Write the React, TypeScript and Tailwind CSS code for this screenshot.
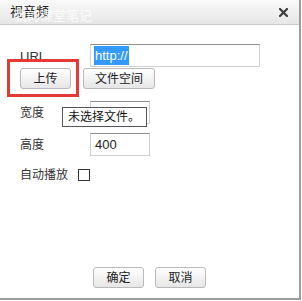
import React from "react"

const font = { fontFamily: '"Liberation Sans", "Noto Sans CJK SC", sans-serif' }

function Btn({ children, className = "" }: { children: React.ReactNode; className?: string }) {
  return (
    <button
      className={`h-[21px] rounded-[3px] border border-[#b9b9b9] bg-gradient-to-b from-[#ffffff] to-[#e6e6e6] text-[12px] leading-none text-[#222] ${className}`}
    >
      {children}
    </button>
  )
}

export default function App() {
  return (
    <div className="relative h-[301px] w-[302px] bg-white" style={font}>
      <div className="flex h-[300px] w-[301px] flex-col border-r-2 border-b-2 border-[#9c9c9c]">
        {/* Barre de titre */}
        <div className="relative flex h-[25px] shrink-0 items-center justify-between border-b border-[#c9c9c9] bg-gradient-to-b from-[#f9f9f9] to-[#e6e6e6] pl-[10px] pr-[10px]">
          <span className="text-[13px] text-[#222]">视音频</span>
          <span className="absolute left-[14px] top-[9px] text-[13px] leading-none text-white/80">我的课堂笔记</span>
          <svg width="9" height="9" viewBox="0 0 9 9" className="mr-[1px]">
            <path d="M1 1 L8 8 M8 1 L1 8" stroke="#3c3c3c" strokeWidth="2.2" strokeLinecap="square" />
          </svg>
        </div>

        {/* Formulaire */}
        <div className="flex flex-1 flex-col pl-[20px] pt-[19px] text-[12px] text-[#333]">
          <div className="flex items-end">
            <span className="w-[70px] shrink-0 pb-[1px] text-[13px]">URL</span>
            <div className="flex h-[23px] w-[170px] items-center border border-[#cfcfcf] border-t-[#8f8f8f] pl-[3px] text-[13px]">
              <span className="bg-[#3399ff] px-[1px] text-white">http://</span>
            </div>
          </div>

          <div className="mt-[1px] flex gap-[12px]">
            <Btn className="w-[51px]">上传</Btn>
            <Btn className="w-[72px]">文件空间</Btn>
          </div>

          <div className="mt-[12px] flex items-center">
            <span className="w-[70px] shrink-0">宽度</span>
            <div className="h-[23px] w-[60px] border border-[#cfcfcf] border-t-[#8f8f8f]" />
          </div>

          <div className="mt-[9px] flex items-center">
            <span className="w-[70px] shrink-0">高度</span>
            <div className="flex h-[23px] w-[60px] items-center border border-[#cfcfcf] border-t-[#8f8f8f] pl-[4px] text-[13px] text-[#222]">
              400
            </div>
          </div>

          <div className="mt-[10px] flex items-center">
            <span className="w-[58px] shrink-0">自动播放</span>
            <span className="h-[12px] w-[12px] shrink-0 border border-[#333]" />
          </div>

          <div className="mt-auto mb-[10px] flex justify-center gap-[11px] pr-[20px]">
            <Btn className="w-[51px]">确定</Btn>
            <Btn className="w-[51px]">取消</Btn>
          </div>
        </div>
      </div>

      {/* Annotation rouge */}
      <div className="pointer-events-none absolute left-[7px] top-[59px] h-[38px] w-[72px] border-[3px] border-[#e53935]" />

      {/* Infobulle */}
      <div className="absolute left-[62px] top-[107px] flex h-[20px] w-[85px] items-center whitespace-nowrap border border-[#555] bg-white pl-[5px] text-[12px] text-[#111]">
        未选择文件。
      </div>
    </div>
  )
}
